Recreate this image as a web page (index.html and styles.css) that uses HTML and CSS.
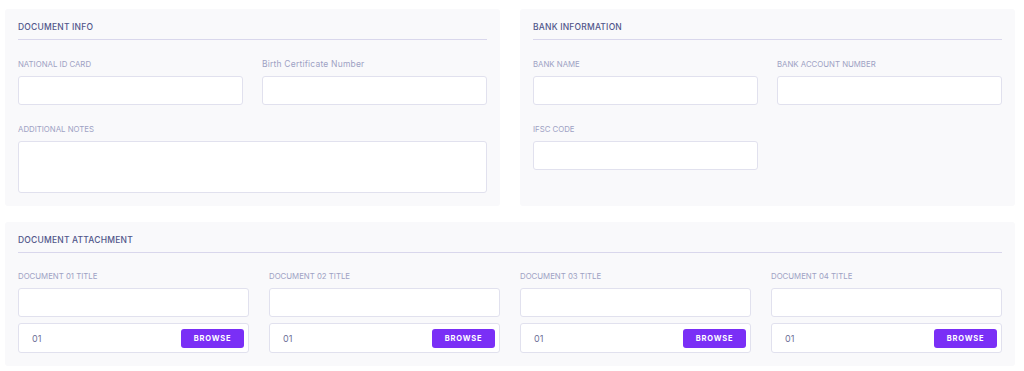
FILE: index.html
```html
<!DOCTYPE html>
<html>
<head>
<meta charset="utf-8">
<link rel="stylesheet" href="styles.css">
</head>
<body>
<div class="page">
  <div class="top-row">
    <section class="card">
      <h2 class="card-title">DOCUMENT INFO</h2>
      <div class="grid two">
        <div class="field">
          <label class="label">NATIONAL ID CARD</label>
          <div class="input"></div>
        </div>
        <div class="field">
          <label class="label mixed">Birth Certificate Number</label>
          <div class="input"></div>
        </div>
        <div class="field span2">
          <label class="label">ADDITIONAL NOTES</label>
          <div class="input textarea"></div>
        </div>
      </div>
    </section>
    <section class="card">
      <h2 class="card-title">BANK INFORMATION</h2>
      <div class="grid two">
        <div class="field">
          <label class="label">BANK NAME</label>
          <div class="input"></div>
        </div>
        <div class="field">
          <label class="label">BANK ACCOUNT NUMBER</label>
          <div class="input"></div>
        </div>
        <div class="field">
          <label class="label">IFSC CODE</label>
          <div class="input"></div>
        </div>
      </div>
    </section>
  </div>
  <section class="card attach">
    <h2 class="card-title">DOCUMENT ATTACHMENT</h2>
    <div class="grid four">
      <div class="field">
        <label class="label">DOCUMENT 01 TITLE</label>
        <div class="input"></div>
        <div class="input file"><span class="file-name">01</span><span class="browse">BROWSE</span></div>
      </div>
      <div class="field">
        <label class="label">DOCUMENT 02 TITLE</label>
        <div class="input"></div>
        <div class="input file"><span class="file-name">01</span><span class="browse">BROWSE</span></div>
      </div>
      <div class="field">
        <label class="label">DOCUMENT 03 TITLE</label>
        <div class="input"></div>
        <div class="input file"><span class="file-name">01</span><span class="browse">BROWSE</span></div>
      </div>
      <div class="field">
        <label class="label">DOCUMENT 04 TITLE</label>
        <div class="input"></div>
        <div class="input file"><span class="file-name">01</span><span class="browse">BROWSE</span></div>
      </div>
    </div>
  </section>
</div>
</body>
</html>
```
FILE: styles.css
```css
* { box-sizing: border-box; }
html, body { margin: 0; padding: 0; background: #ffffff; }
body {
  font-family: "Inter", "Noto Sans", sans-serif;
  color: #5a5e8e;
}
.page {
  padding: 9px 9px 0 5px;
  display: flex;
  flex-direction: column;
  gap: 16px;
}
.top-row {
  display: grid;
  grid-template-columns: 1fr 1fr;
  gap: 20px;
}
.card {
  background: #f9f9fb;
  border-radius: 3px;
  padding: 12px 13px 13px 13px;
}
.card-title {
  margin: 0;
  font-size: 8.5px;
  line-height: 12px;
  font-weight: 500;
  color: #51568a;
  padding-bottom: 6px;
  border-bottom: 1px solid #d9d7ec;
  letter-spacing: 0.2px;
}
.grid {
  display: grid;
  padding-top: 18px;
  column-gap: 19px;
  row-gap: 18px;
}
.grid.two { grid-template-columns: 1fr 1fr; }
.grid.four { grid-template-columns: repeat(4, 1fr); column-gap: 20px; padding-top: 17px; }
.span2 { grid-column: span 2; }
.field {
  display: flex;
  flex-direction: column;
}
.label {
  font-size: 7.8px;
  line-height: 12px;
  color: #9ea2c4;
  margin-bottom: 6px;
}
.label.mixed {
  font-size: 8.5px;
  letter-spacing: 0.2px;
}
.input {
  height: 29px;
  background: #ffffff;
  border: 1px solid #e1e1ee;
  border-radius: 3px;
}
.textarea { height: 52px; }
.file {
  margin-top: 6px;
  height: 30px;
  display: flex;
  align-items: center;
  justify-content: space-between;
  padding: 0 4px 0 13px;
}
.file-name {
  font-size: 9px;
  color: #6c7098;
}
.browse {
  background: #7a2ff6;
  color: #ffffff;
  font-size: 7.5px;
  font-weight: 700;
  letter-spacing: 0.8px;
  width: 63px;
  height: 19px;
  border-radius: 3px;
  display: flex;
  align-items: center;
  justify-content: center;
}
```
